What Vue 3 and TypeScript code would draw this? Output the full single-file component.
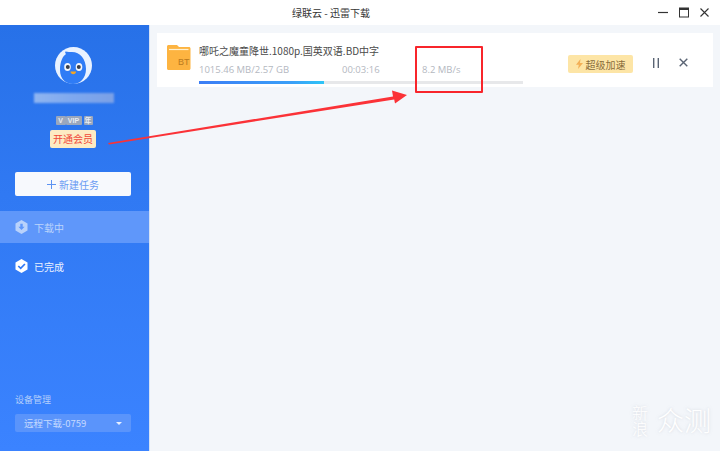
<template>
  <div class="window">
    <header class="titlebar">
      <span class="title">绿联云 - 迅雷下载</span>
      <div class="win-btns">
        <svg width="10" height="11" viewBox="0 0 10 11"><path d="M0 5.500h10" stroke="#333" stroke-width="1.200" /></svg>
        <svg width="10" height="11" viewBox="0 0 10 11"><rect x="0.500" y="1" width="9" height="9" fill="none" stroke="#333" /><path d="M0.500 2h9" stroke="#333" stroke-width="2" /></svg>
        <svg width="9" height="11" viewBox="0 0 9 11"><path d="M.5 1.500l8 8M8.500 1.500l-8 8" stroke="#333" stroke-width="1.100" /></svg>
      </div>
    </header>

    <div class="body">
      <aside class="sidebar">
        <div class="profile">
          <svg class="avatar" width="37" height="37" viewBox="0 0 37 37">
            <circle cx="18.500" cy="18.500" r="18.500" fill="#e9f2ff" />
            <path d="M5 23C5 14 8 9 11 7c-1-1-1-2-.500-2.500C13 5 15 5 17 5c8 0 14 7 14 17 0 9-6 15-13 15S5 32 5 23z" fill="#2f7cf6" />
            <ellipse cx="12.500" cy="20" rx="3.300" ry="4" fill="#f4f6fa" />
            <ellipse cx="24" cy="20" rx="3.300" ry="4" fill="#f4f6fa" />
            <circle cx="12.800" cy="20" r="2" fill="#3a3f4a" />
            <circle cx="23.800" cy="20" r="2" fill="#3a3f4a" />
            <path d="M15.500 24.500h5.500c0 1.800-1.300 2.700-2.700 2.700s-2.800-.9-2.800-2.700z" fill="#f5a623" />
          </svg>
          <div class="name-blur"></div>
          <div class="badges">
            <span class="badge first">V</span>
            <span class="badge vip">VIP</span>
            <span class="badge year">年</span>
          </div>
          <span class="open-vip">开通会员</span>
        </div>

        <button class="new-task">
          <svg width="9" height="9" viewBox="0 0 9 9"><path d="M4.500 0v9M0 4.500h9" stroke="#5d93f2" /></svg>
          新建任务
        </button>

        <nav class="nav">
          <div v-for="item in navItems" :key="item.label" :class="['nav-item', { active: item.active }]">
            <svg width="13" height="14" viewBox="0 0 13 14">
              <path d="M6.500 0l6 3.500v7L6.500 14l-6-3.500v-7z" fill="#fff" />
              <path v-if="item.active" d="M5.300 3.800h2.400v3h1.900L6.500 10 3.400 6.800h1.900z" fill="#5f97fa" />
              <path v-else d="M3.300 7l2.400 2.400 4.200-4.400" fill="none" stroke="#2f78f5" stroke-width="1.700" />
            </svg>
            <span>{{ item.label }}</span>
          </div>
        </nav>

        <div class="device">
          <div class="device-label">设备管理</div>
          <div class="device-select">
            <span>远程下载-0759</span>
            <i class="caret"></i>
          </div>
        </div>
      </aside>

      <main class="content">
        <section class="task">
          <svg class="folder" width="24" height="26" viewBox="0 0 24 26">
            <path d="M0 2.500C0 1.700.7 1 1.500 1H10l2 2h10c.8 0 1.500.7 1.500 1.500v20c0 .8-.7 1.500-1.500 1.500H1.500C.7 26 0 25.300 0 24.500z" fill="#fdb441" />
            <path d="M2 5.500h19.500" stroke="#fff0cf" stroke-width="1.200" />
            <text x="11" y="21" class="bt">BT</text>
          </svg>
          <div class="info">
            <div class="task-name">哪吒之魔童降世.1080p.国英双语.BD中字</div>
            <div class="meta">
              <span class="size">1015.46 MB/2.57 GB</span>
              <span class="time">00:03:16</span>
              <span class="speed">8.2 MB/s</span>
            </div>
            <div class="progress">
              <div class="bar" :style="{ width: progress + '%' }"></div>
            </div>
          </div>
          <button class="boost">
            <svg width="7" height="10" viewBox="0 0 7 10"><path d="M4.500 0L0 5.700h2.800L2 10l5-6H4z" fill="#f3b057" /></svg>
            超级加速
          </button>
          <svg class="act pause" width="6" height="10" viewBox="0 0 6 10"><path d="M.7 0v10M5.300 0v10" stroke="#5a6474" stroke-width="1.400" /></svg>
          <svg class="act" width="9" height="9" viewBox="0 0 9 9"><path d="M.7.700l7.600 7.600M8.300.700L.7 8.300" stroke="#5a6474" stroke-width="1.400" /></svg>
        </section>
      </main>
    </div>

    <div class="red-box"></div>
    <svg class="arrow" width="720" height="451" viewBox="0 0 720 451">
      <path d="M108 143L393 96.500l-1-6L407 95l-12 8.500-.8-4L109 144.500z" fill="#fb3237" />
    </svg>

    <div class="watermark">
      <div class="wm-small">新浪</div>
      <div class="wm-big">众测</div>
    </div>
  </div>
</template>

<script setup lang="ts">
const progress = 38.6

const navItems = [
  { label: "下载中", active: true },
  { label: "已完成", active: false },
]
</script>

<style>
html,
body {
  margin: 0;
  background: #fff;
}
</style>

<style scoped>
.window {
  position: relative;
  width: 720px;
  height: 451px;
  overflow: hidden;
  font-family: "Noto Sans CJK SC", "Open Sans", sans-serif;
}
.titlebar {
  position: relative;
  height: 25px;
  padding-right: 58px;
  box-sizing: border-box;
  background: #fff;
  display: flex;
  align-items: center;
  justify-content: center;
}
.title {
  font-size: 10px;
  color: #333;
}
.win-btns {
  position: absolute;
  right: 11px;
  top: 7px;
  display: flex;
  gap: 11px;
}
.body {
  display: flex;
  height: 426px;
}
.sidebar {
  width: 149px;
  flex: none;
  display: flex;
  flex-direction: column;
  background: linear-gradient(180deg, #2771e8 0%, #3079f3 40%, #3b83ff 100%);
  border-right: 1px solid #d6e2f5;
}
.profile {
  display: flex;
  flex-direction: column;
  align-items: center;
  padding: 22px 3px 0 0;
}
.avatar {
  display: block;
}
.name-blur {
  width: 80px;
  height: 10px;
  margin: 9px 0 0 2px;
  background: linear-gradient(90deg, #8fb5f1, #7ea8ef 50%, #7ba0e6);
  filter: blur(1px);
}
.badges {
  display: flex;
  margin: 13px 0 0 2px;
}
.badge {
  height: 9px;
  line-height: 9px;
  text-align: center;
  background: #9aa7bd;
  border-radius: 1px;
  font-family: "Liberation Sans", sans-serif;
  font-size: 7px;
  font-weight: 700;
  color: #e8edf5;
}
.first {
  width: 10px;
}
.vip {
  width: 16px;
}
.year {
  width: 9px;
  margin-left: 2px;
  font-family: "Noto Sans CJK SC", sans-serif;
}
.open-vip {
  margin-top: 5px;
  width: 46px;
  height: 18px;
  line-height: 18px;
  text-align: center;
  background: #fdebc3;
  border-radius: 2px;
  font-size: 10px;
  color: #f0473a;
}
.new-task {
  display: flex;
  align-items: center;
  justify-content: center;
  gap: 3px;
  margin: 24px 18px 0 15px;
  height: 24px;
  padding: 0;
  background: #f7f9fd;
  border: none;
  border-radius: 2px;
  font-family: inherit;
  font-size: 10px;
  color: #6b9cf3;
}
.nav {
  margin-top: 15px;
}
.nav-item {
  display: flex;
  align-items: center;
  gap: 6px;
  height: 32px;
  padding-left: 15px;
  margin-bottom: 7px;
  font-size: 10px;
  color: #eaf2ff;
}
.nav-item.active {
  background: #5f97fa;
  color: #bcd4fb;
}
.nav-item.active svg path:first-child {
  fill: #b9d2fb;
}
.device {
  margin-top: auto;
  padding: 0 18px 19px 15px;
}
.device-label {
  font-size: 9px;
  line-height: 12px;
  color: #b4cffb;
  margin-bottom: 8px;
}
.device-select {
  display: flex;
  align-items: center;
  justify-content: space-between;
  height: 18px;
  padding: 0 9px;
  background: #5a94fb;
  border-radius: 2px;
  font-size: 9.5px;
  color: #c5daff;
}
.caret {
  border: 3px solid transparent;
  border-top: 3px solid #e8f0ff;
  border-bottom: none;
}
.content {
  flex: 1;
  background: #f3f6fa;
  padding: 8px 7px 0;
}
.task {
  display: flex;
  align-items: flex-start;
  height: 54px;
  padding-left: 10px;
  background: #fff;
}
.folder {
  margin-top: 11px;
  flex: none;
}
.bt {
  font-family: "Liberation Sans", sans-serif;
  font-size: 9px;
  fill: #b97a1e;
}
.info {
  width: 324px;
  margin-left: 8px;
}
.task-name {
  margin-top: 11px;
  font-size: 10px;
  line-height: 14px;
  color: #4a4a4a;
}
.meta {
  display: flex;
  margin-top: 6px;
  font-family: "Open Sans", sans-serif;
  font-size: 9.5px;
  line-height: 12px;
  color: #b4b8bf;
}
.size {
  width: 143px;
}
.time {
  width: 80px;
}
.progress {
  height: 3px;
  margin-top: 5px;
  background: #e7e8ea;
}
.bar {
  height: 100%;
  background: linear-gradient(90deg, #3b7df5, #3aa0f8 75%, #2ec5f7);
}
.boost {
  display: flex;
  align-items: center;
  justify-content: center;
  gap: 3px;
  width: 65px;
  height: 18px;
  margin: 22px 0 0 45px;
  padding: 0;
  background: #fde5a6;
  border: none;
  border-radius: 2px;
  font-family: inherit;
  font-size: 10px;
  color: #8a6d3b;
}
.act {
  margin-top: 25px;
  flex: none;
}
.pause {
  margin-left: 20px;
  margin-right: 20px;
}
.red-box {
  position: absolute;
  left: 415px;
  top: 46px;
  width: 64px;
  height: 43px;
  border: 2px solid #f8252b;
  border-radius: 1px;
}
.arrow {
  position: absolute;
  left: 0;
  top: 0;
  pointer-events: none;
}
.watermark {
  position: absolute;
  left: 632px;
  top: 405px;
  display: flex;
  gap: 9px;
  color: #fff;
  font-family: "Noto Sans CJK SC", sans-serif;
  font-weight: 300;
  text-shadow: 0 0 3px rgba(185, 190, 200, 0.55);
}
.wm-small {
  writing-mode: vertical-rl;
  font-size: 16px;
  line-height: 16px;
}
.wm-big {
  font-size: 27px;
  line-height: 30px;
}
</style>
